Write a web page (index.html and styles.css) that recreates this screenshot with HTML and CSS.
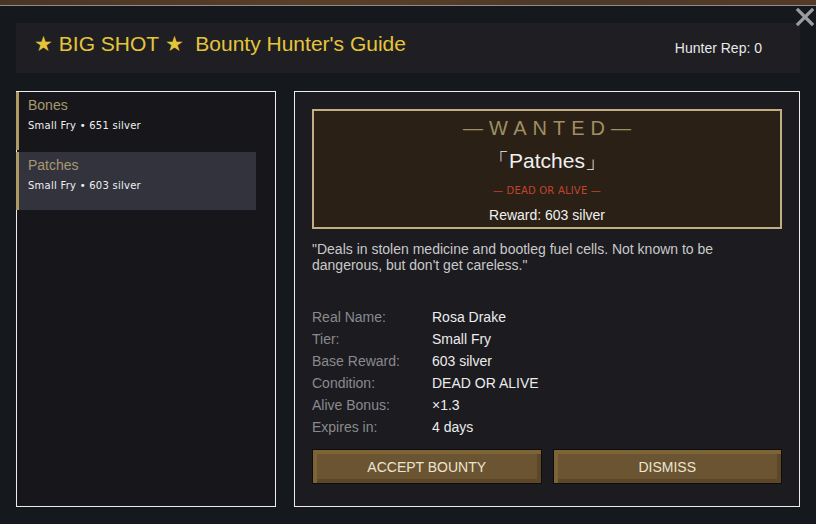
FILE: index.html
```html
<!DOCTYPE html>
<html lang="en">
<head>
    <meta charset="UTF-8">
    <meta name="viewport" content="width=device-width, initial-scale=1.0">
    <title>Bounty Hunter's Guide</title>
    <link rel="stylesheet" href="styles.css">
</head>
<body>
    <div class="world"></div>

    <div class="window">
        <button class="close" aria-label="Close">
            <svg width="18" height="18" viewBox="0 0 18 18">
                <path d="M2 2 L16 16 M16 2 L2 16" stroke="#9a9ca0" stroke-width="3.2" stroke-linecap="square"/>
            </svg>
        </button>

        <div class="header">
            <h1>★ BIG SHOT ★&nbsp; Bounty Hunter's Guide</h1>
            <span class="rep">Hunter Rep: 0</span>
        </div>

        <div class="panels">
            <!-- bounty list -->
            <div class="list">
                <div class="item">
                    <div class="item-name">Bones</div>
                    <div class="item-sub">Small Fry • 651 silver</div>
                </div>
                <div class="item selected">
                    <div class="item-name">Patches</div>
                    <div class="item-sub">Small Fry • 603 silver</div>
                </div>
            </div>

            <!-- details -->
            <div class="detail">
                <div class="poster">
                    <div class="wanted">—WANTED—</div>
                    <div class="alias">「Patches」</div>
                    <div class="condition">— DEAD OR ALIVE —</div>
                    <div class="reward">Reward: 603 silver</div>
                </div>

                <p class="quote">"Deals in stolen medicine and bootleg fuel cells. Not known to be dangerous, but don't get careless."</p>

                <div class="stats">
                    <span class="label">Real Name:</span><span class="value">Rosa Drake</span>
                    <span class="label">Tier:</span><span class="value">Small Fry</span>
                    <span class="label">Base Reward:</span><span class="value">603 silver</span>
                    <span class="label">Condition:</span><span class="value">DEAD OR ALIVE</span>
                    <span class="label">Alive Bonus:</span><span class="value">×1.3</span>
                    <span class="label">Expires in:</span><span class="value">4 days</span>
                </div>

                <div class="actions">
                    <button class="btn">ACCEPT BOUNTY</button>
                    <button class="btn">DISMISS</button>
                </div>
            </div>
        </div>
    </div>
</body>
</html>
```

FILE: styles.css
```css
/* Bounty board */
body {
    margin: 0;
    padding: 0;
    background: #15181c;
    font-family: 'Liberation Sans', Arial, sans-serif;
    width: 816px;
    height: 524px;
    overflow: hidden;
}

.world {
    height: 5px;
    background: linear-gradient(90deg, #4a3424, #5a3f28 40%, #4d3826 70%, #553b27);
    border-bottom: 1px solid #8c8c8e;
}

.window {
    position: relative;
    padding: 17px 16px 0 16px;
}

.close {
    position: absolute;
    top: 2px;
    right: 2px;
    background: none;
    border: none;
    padding: 0;
    cursor: pointer;
}

.close svg {
    display: block;
}

.header {
    height: 50px;
    background: #1f1f23;
    display: flex;
    align-items: center;
    justify-content: space-between;
    padding: 0 38px 0 18px;
}

h1 {
    margin: 0 0 8px 0;
    font-size: 21px;
    font-weight: normal;
    color: #e4c53a;
}

.rep {
    color: #e8e8e8;
    font-size: 14px;
    margin-bottom: 1px;
}

.panels {
    display: flex;
    gap: 18px;
    margin-top: 18px;
    height: 416px;
}

.list {
    width: 258px;
    border: 1px solid #ececec;
    background: #17161b;
    display: flex;
    flex-direction: column;
    gap: 2px;
}

.item {
    width: 240px;
    height: 58px;
    box-sizing: border-box;
    margin-left: -1px;
    border-left: 3px solid #b09a64;
    padding: 5px 0 0 9px;
}

.item.selected {
    background: #33333e;
}

.item-name {
    color: #a6996f;
    font-size: 14px;
    line-height: 17px;
}

.item-sub {
    color: #f0f0f0;
    font-family: 'DejaVu Sans', sans-serif;
    font-size: 10px;
    letter-spacing: 0.25px;
    line-height: 14px;
    margin-top: 5px;
}

.detail {
    flex: 1;
    border: 1px solid #ececec;
    background: #1b1b20;
    padding: 17px 17px 0 17px;
}

.poster {
    height: 116px;
    border: 2px solid #c2ae82;
    background: #2a2016;
    text-align: center;
}

.wanted {
    color: #a08f63;
    font-size: 20px;
    letter-spacing: 6px;
    line-height: 22px;
    margin-top: 6px;
    padding-left: 6px;
}

.alias {
    color: #f0f0f0;
    font-size: 21px;
    line-height: 24px;
    margin-top: 10px;
}

.condition {
    color: #c2432e;
    font-family: 'DejaVu Sans', sans-serif;
    font-size: 10px;
    letter-spacing: 0.2px;
    line-height: 12px;
    margin-top: 12px;
}

.reward {
    color: #f0f0f0;
    font-size: 14px;
    line-height: 16px;
    margin-top: 10px;
}

.quote {
    margin: 12px 0 0 0;
    color: #c9c9c9;
    font-size: 14px;
    line-height: 16px;
    width: 440px;
}

.stats {
    display: grid;
    grid-template-columns: 120px 1fr;
    grid-auto-rows: 22px;
    align-items: center;
    margin-top: 33px;
    font-size: 14px;
}

.label {
    color: #8a8a8e;
}

.value {
    color: #ececec;
}

.actions {
    display: flex;
    gap: 11px;
    margin-top: 11px;
}

.btn {
    flex: 1;
    height: 35px;
    background: #6b5431;
    border: 1px solid #0d0d0d;
    box-shadow: inset 4px 4px 0 #7c6437, inset -4px -4px 0 #5c4829;
    color: #ece4d2;
    font-family: 'Liberation Sans', Arial, sans-serif;
    font-size: 14px;
    padding: 0;
    cursor: pointer;
}
```
